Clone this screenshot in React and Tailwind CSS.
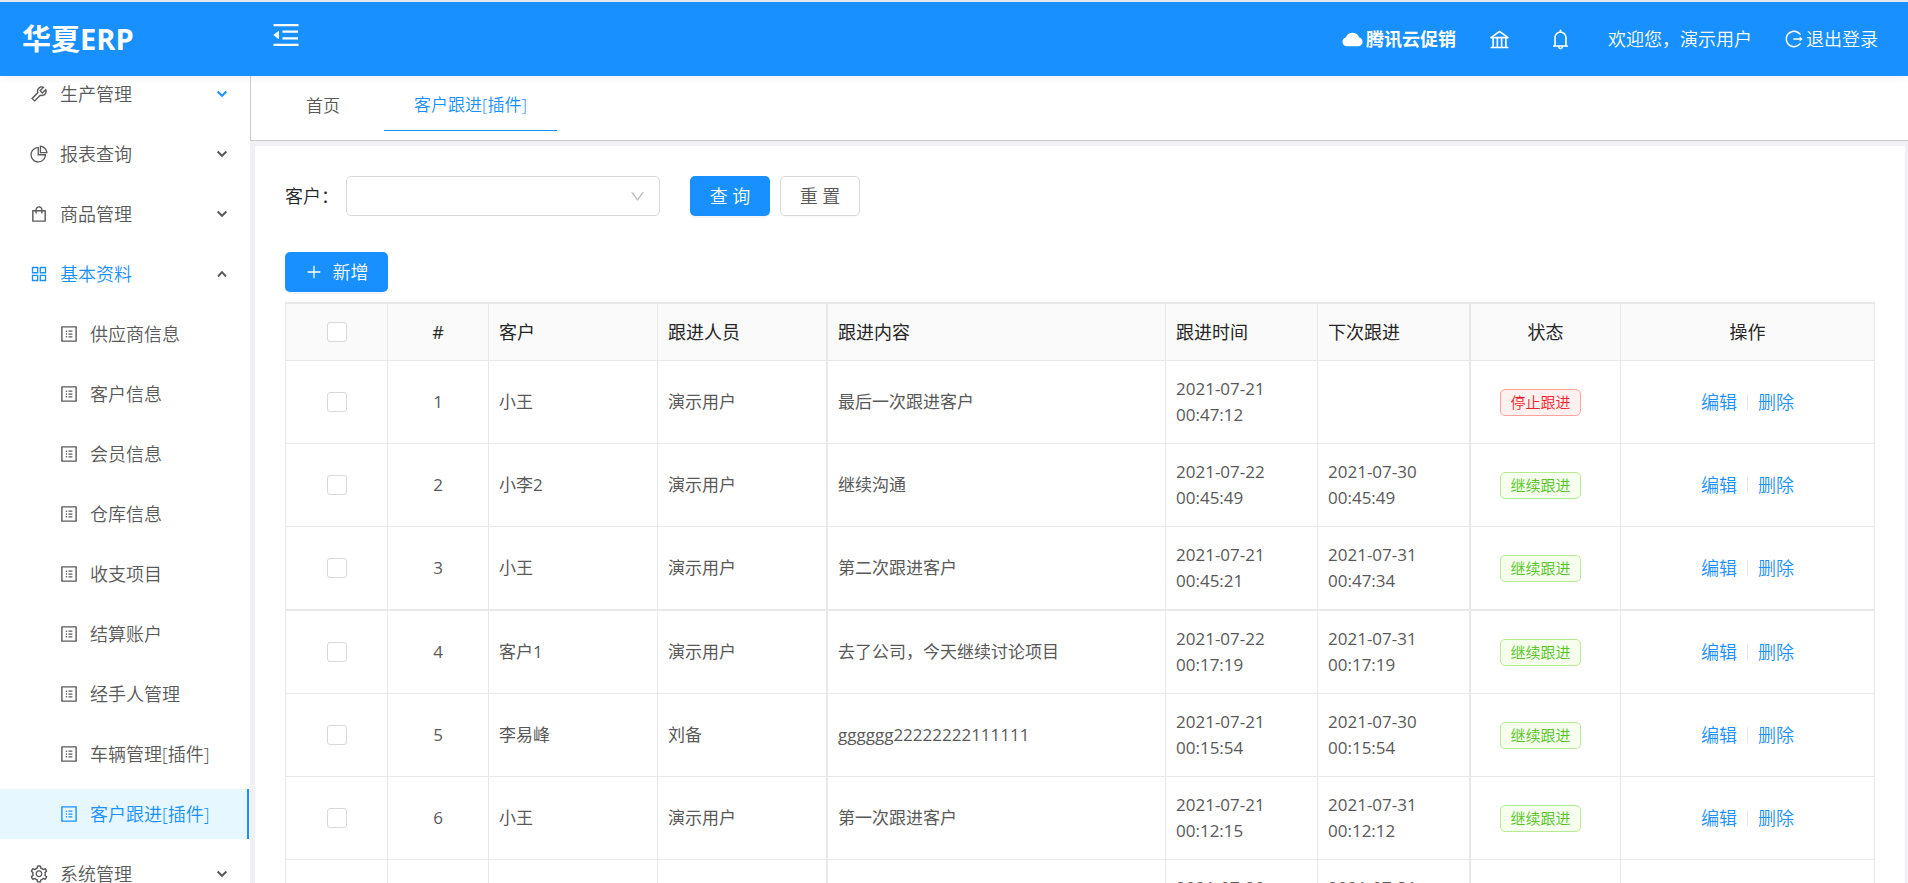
import {
  AiFillCloud,
  AiOutlineAppstore,
  AiOutlineBank,
  AiOutlineBell,
  AiOutlineDown,
  AiOutlineLogout,
  AiOutlineMenuFold,
  AiOutlinePieChart,
  AiOutlinePlus,
  AiOutlineProfile,
  AiOutlineSetting,
  AiOutlineShopping,
  AiOutlineTool,
} from "react-icons/ai";

const groups = [
  { label: "生产管理", icon: AiOutlineTool, hovered: true },
  { label: "报表查询", icon: AiOutlinePieChart },
  { label: "商品管理", icon: AiOutlineShopping },
  {
    label: "基本资料",
    icon: AiOutlineAppstore,
    open: true,
    children: [
      "供应商信息",
      "客户信息",
      "会员信息",
      "仓库信息",
      "收支项目",
      "结算账户",
      "经手人管理",
      "车辆管理[插件]",
      "客户跟进[插件]",
    ],
  },
  { label: "系统管理", icon: AiOutlineSetting },
];

const activePage = "客户跟进[插件]";

const rows = [
  ["小王", "演示用户", "最后一次跟进客户", "2021-07-21", "00:47:12", "", "", "停止跟进"],
  ["小李2", "演示用户", "继续沟通", "2021-07-22", "00:45:49", "2021-07-30", "00:45:49", "继续跟进"],
  ["小王", "演示用户", "第二次跟进客户", "2021-07-21", "00:45:21", "2021-07-31", "00:47:34", "继续跟进"],
  ["客户1", "演示用户", "去了公司，今天继续讨论项目", "2021-07-22", "00:17:19", "2021-07-31", "00:17:19", "继续跟进"],
  ["李易峰", "刘备", "gggggg22222222111111", "2021-07-21", "00:15:54", "2021-07-30", "00:15:54", "继续跟进"],
  ["小王", "演示用户", "第一次跟进客户", "2021-07-21", "00:12:15", "2021-07-31", "00:12:12", "继续跟进"],
  ["小王", "演示用户", "第一次跟进客户", "2021-07-20", "23:58:20", "2021-07-31", "23:58:16", "继续跟进"],
];

function Chevron({ up, className }) {
  return (
    <svg viewBox="0 0 12 12" className={`size-3 ${className}`} fill="none" stroke="currentColor" strokeWidth="1.9">
      <path d={up ? "M2 8.5 6 4.2l4 4.3" : "M1.6 3.5 6 7.8l4.4-4.3"} />
    </svg>
  );
}

function Sidebar() {
  return (
    <nav className="-mt-[7px] w-[250px] shrink-0 bg-white text-[18px] text-[#595959]">
      {groups.map((g) => (
        <div key={g.label}>
          <button
            type="button"
            className={`mb-2.5 flex h-[50px] w-full items-center pr-[22px] pl-[29px] ${g.open ? "text-[#1890ff]" : ""}`}
          >
            <g.icon className="mr-[11px] size-5" />
            <span className="grow text-left">{g.label}</span>
            <Chevron up={g.open} className={g.hovered ? "text-[#1890ff]" : "text-[#595959]"} />
          </button>
          {g.children?.map((c) => (
            <a
              key={c}
              href="#"
              className={`mr-px mb-2.5 flex h-[50px] items-center border-r-2 pl-[59px] ${
                c === activePage ? "border-[#1890ff] bg-[#e6f7ff] text-[#1890ff]" : "border-transparent"
              }`}
            >
              <AiOutlineProfile className="mr-[11px] size-5" />
              {c}
            </a>
          ))}
        </div>
      ))}
    </nav>
  );
}

function Check({ label }) {
  return (
    <input
      type="checkbox"
      aria-label={label}
      className="mx-auto block size-5 appearance-none rounded-[3px] border border-[#d9d9d9] bg-white"
    />
  );
}

function Header() {
  return (
    <header className="relative z-10 flex h-[76px] shrink-0 items-center border-t-2 border-[#e4e8ec] bg-[#1890ff] text-[18px] text-white shadow-[0_2px_8px_rgba(0,0,0,0.06)]">
      <h1 className="w-[250px] pl-[22px] text-[29px] font-bold">华夏ERP</h1>
      <button type="button" aria-label="收起菜单" className="mb-2 ml-5">
        <AiOutlineMenuFold className="size-8" />
      </button>
      <div className="ml-auto flex items-center pr-[30px]">
        <a href="#" className="mr-8 flex items-center gap-0.5 font-bold">
          <AiFillCloud className="size-[23px]" />
          腾讯云促销
        </a>
        <a href="#" aria-label="官网" className="mr-[38px]">
          <AiOutlineBank className="size-[23px]" />
        </a>
        <button type="button" aria-label="消息" className="mr-9">
          <AiOutlineBell className="size-[23px]" />
        </button>
        <span className="mr-8">欢迎您，演示用户</span>
        <a href="#" className="flex items-center gap-0.5">
          <AiOutlineLogout className="size-5" />
          退出登录
        </a>
      </div>
    </header>
  );
}

const th = "h-[57px] border-r border-b border-[#e8e8e8] bg-[#fafafa] px-2.5 font-normal";
const td = "h-[83px] border-r border-b border-[#e8e8e8] px-2.5";

function FollowTable() {
  return (
    <table className="mt-2.5 w-full table-fixed border-separate border-spacing-0 border-t-2 border-l border-[#e8e8e8] text-left text-[17px] leading-[26px] font-normal text-[#595959]">
      <colgroup>
        <col className="w-[102px]" />
        <col className="w-[101px]" />
        <col className="w-[169px]" />
        <col className="w-[170px]" />
        <col />
        <col className="w-[152px]" />
        <col className="w-[153px]" />
        <col className="w-[150px]" />
        <col className="w-[254px]" />
      </colgroup>
      <thead className="text-[18px] text-[#262626]">
        <tr>
          <th className={th}>
            <Check label="全选" />
          </th>
          <th className={`${th} text-center`}>#</th>
          <th className={th}>客户</th>
          <th className={`${th} border-r-2`}>跟进人员</th>
          <th className={th}>跟进内容</th>
          <th className={th}>跟进时间</th>
          <th className={`${th} border-r-2`}>下次跟进</th>
          <th className={`${th} text-center`}>状态</th>
          <th className={`${th} text-center`}>操作</th>
        </tr>
      </thead>
      <tbody>
        {rows.map(([customer, staff, content, d1, t1, d2, t2, status], i) => (
          <tr key={i} className={i === 2 ? "[&>td]:h-[84px] [&>td]:border-b-2" : ""}>
            <td className={td}>
              <Check label={`选择第${i + 1}行`} />
            </td>
            <td className={`${td} text-center`}>{i + 1}</td>
            <td className={td}>{customer}</td>
            <td className={`${td} border-r-2`}>{staff}</td>
            <td className={td}>{content}</td>
            <td className={td}>
              {d1} {t1}
            </td>
            <td className={`${td} border-r-2`}>
              {d2} {t2}
            </td>
            <td className={`${td} pr-5 text-center font-[350]`}>
              <span
                className={`inline-block rounded-[5px] border px-[9px] align-middle text-[15px] leading-[25px] ${
                  status === "停止跟进"
                    ? "border-[#ffa39e] bg-[#fff1f0] text-[#f5222d]"
                    : "border-[#b7eb8f] bg-[#f6ffed] text-[#52c41a]"
                }`}
              >
                {status}
              </span>
            </td>
            <td className={`${td} text-[18px] font-[350] text-[#1890ff]`}>
              <div className="flex items-center justify-center gap-2.5">
                <a href="#">编辑</a>
                <span className="h-4 w-px bg-[#e8e8e8]" />
                <a href="#">删除</a>
              </div>
            </td>
          </tr>
        ))}
      </tbody>
    </table>
  );
}

export default function App() {
  return (
    <div className="flex h-screen flex-col overflow-hidden bg-[#f0f0f5] font-['Open_Sans','Noto_Sans_CJK_SC',sans-serif] font-[350]">
      <Header />
      <div className="flex min-h-0 grow">
        <Sidebar />
        <div className="flex min-w-0 grow flex-col">
          <div className="flex h-[65px] shrink-0 border-b border-l border-[#ccc] bg-white pl-[25px] text-[17px]">
            <button type="button" className="mr-3.5 h-[55px] px-[30px] pt-1 text-[#595959]">
              首页
            </button>
            <button type="button" className="h-[55px] border-b border-[#1890ff] px-[30px] pt-1 text-[#1890ff]">
              客户跟进[插件]
            </button>
          </div>
          <main className="mt-[5px] mr-[3px] ml-[5px] grow bg-white px-[30px] pt-[30px] text-[18px]">
            <form className="flex items-center text-[#262626]">
              <label htmlFor="customer" className="w-[61px]">
                客户：
              </label>
              <div className="relative">
                <select
                  id="customer"
                  defaultValue=""
                  className="block h-10 w-[314px] appearance-none rounded-[5px] border border-[#d9d9d9] bg-white px-3"
                >
                  <option value=""></option>
                  <option>小王</option>
                </select>
                <AiOutlineDown className="pointer-events-none absolute top-3 right-[14px] size-[17px] text-[#bfbfbf]" />
              </div>
              <button type="button" className="ml-[30px] h-10 w-20 rounded-[5px] bg-[#1890ff] text-white shadow-[0_2px_0_rgba(0,0,0,0.045)]">
                查 询
              </button>
              <button type="button" className="ml-2.5 h-10 w-20 rounded-[5px] border border-[#d9d9d9] bg-white text-[#595959] shadow-[0_2px_0_rgba(0,0,0,0.015)]">
                重 置
              </button>
            </form>
            <button
              type="button"
              className="mt-9 flex h-10 w-[103px] items-center justify-center gap-2.5 rounded-[5px] bg-[#1890ff] text-white shadow-[0_2px_0_rgba(0,0,0,0.045)]"
            >
              <AiOutlinePlus className="size-[18px]" />
              新增
            </button>
            <FollowTable />
          </main>
        </div>
      </div>
    </div>
  );
}
